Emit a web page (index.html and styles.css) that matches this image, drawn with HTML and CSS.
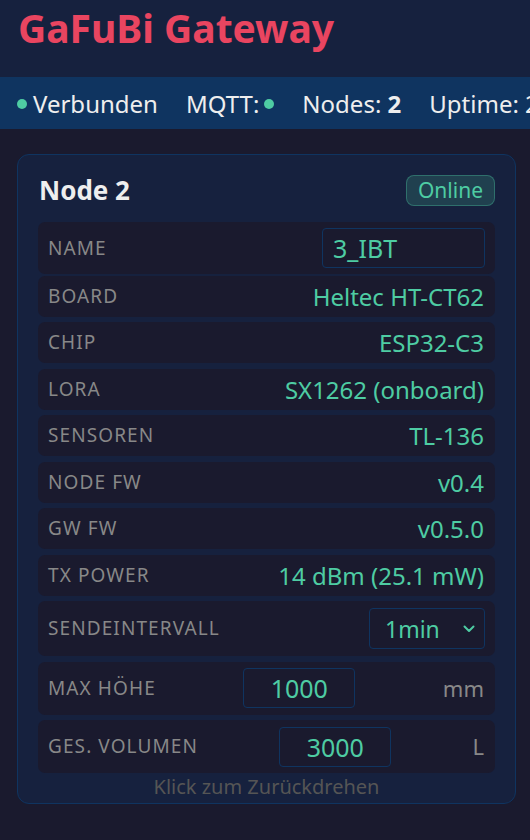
FILE: index.html
```html
<!DOCTYPE html>
<html lang="de">
<head>
    <meta charset="UTF-8">
    <meta name="viewport" content="width=device-width, initial-scale=1.0">
    <title>GaFuBi Gateway</title>
    <link rel="stylesheet" href="styles.css">
</head>
<body>
    <!-- Title bar -->
    <header class="topbar">
        <h1>GaFuBi Gateway</h1>
    </header>

    <!-- Connection status -->
    <div class="status-bar">
        <span class="status-item"><span class="dot dot-before"></span>Verbunden</span>
        <span class="status-item">MQTT:<span class="dot dot-after"></span></span>
        <span class="status-item">Nodes: <strong>2</strong></span>
        <span class="status-item">Uptime: 2h 13m</span>
    </div>

    <main class="content">
        <div class="node-card">
            <div class="card-head">
                <h2>Node 2</h2>
                <span class="badge">Online</span>
            </div>

            <div class="info-list">
                <div class="info-row name-row">
                    <span class="label">Name</span>
                    <input class="text-input" type="text" value="3_IBT">
                </div>
                <div class="info-row">
                    <span class="label">Board</span>
                    <span class="value">Heltec HT-CT62</span>
                </div>
                <div class="info-row">
                    <span class="label">Chip</span>
                    <span class="value">ESP32-C3</span>
                </div>
                <div class="info-row">
                    <span class="label">LoRa</span>
                    <span class="value">SX1262 (onboard)</span>
                </div>
                <div class="info-row">
                    <span class="label">Sensoren</span>
                    <span class="value">TL-136</span>
                </div>
                <div class="info-row">
                    <span class="label">Node FW</span>
                    <span class="value">v0.4</span>
                </div>
                <div class="info-row">
                    <span class="label">GW FW</span>
                    <span class="value">v0.5.0</span>
                </div>
                <div class="info-row">
                    <span class="label">TX Power</span>
                    <span class="value">14 dBm (25.1 mW)</span>
                </div>
                <div class="info-row select-row">
                    <span class="label">Sendeintervall</span>
                    <div class="select-wrap">
                        <select class="interval-select">
                            <option>30s</option>
                            <option selected>1min</option>
                            <option>5min</option>
                            <option>15min</option>
                        </select>
                        <svg class="chevron" width="12" height="8" viewBox="0 0 12 8">
                            <path d="M1.5 1.5 L6 6 L10.5 1.5" fill="none" stroke="#4ecca3" stroke-width="2" stroke-linecap="round" stroke-linejoin="round"/>
                        </svg>
                    </div>
                </div>
                <div class="info-row unit-row">
                    <span class="label">Max Höhe</span>
                    <input class="num-input" type="text" value="1000">
                    <span class="unit">mm</span>
                </div>
                <div class="info-row unit-row">
                    <span class="label">Ges. Volumen</span>
                    <input class="num-input" type="text" value="3000">
                    <span class="unit">L</span>
                </div>
            </div>

            <p class="flip-hint">Klick zum Zurückdrehen</p>
        </div>
    </main>
</body>
</html>
```

FILE: styles.css
```css
/* Dark gateway dashboard */
body {
    font-family: "Noto Sans", "Open Sans", sans-serif;
    background-color: #1a1a2e;
    color: #eee;
    margin: 0;
}

.topbar {
    background-color: #16213e;
    height: 77px;
    box-sizing: border-box;
    padding: 1px 18px 0;
}

.topbar h1 {
    margin: 0;
    font-size: 39px;
    line-height: 53px;
    font-weight: 700;
    color: #e94560;
}

.status-bar {
    background-color: #0f3460;
    height: 52px;
    padding: 0 17px;
    display: flex;
    align-items: center;
    gap: 28px;
    white-space: nowrap;
    overflow: hidden;
    font-size: 24px;
}

.dot {
    display: inline-block;
    width: 10px;
    height: 10px;
    border-radius: 50%;
    background-color: #4ecca3;
    vertical-align: middle;
    position: relative;
    top: -2px;
}

.dot-before {
    margin-right: 6px;
}

.dot-after {
    margin-left: 5px;
}

.content {
    padding: 25px 14px 0 17px;
}

.node-card {
    background-color: #16213e;
    border: 1px solid #0f3460;
    border-radius: 12px;
    padding: 20px 20px 4px;
}

.card-head {
    display: flex;
    align-items: center;
    justify-content: space-between;
    height: 31px;
    margin-bottom: 16px;
}

.card-head h2 {
    margin: 0 0 0 1px;
    font-size: 26px;
    line-height: 31px;
    font-weight: 700;
}

.badge {
    background-color: rgba(78, 204, 163, 0.18);
    border: 1px solid rgba(78, 204, 163, 0.35);
    color: #4ecca3;
    border-radius: 8px;
    padding: 0 11px;
    height: 29px;
    line-height: 29px;
    font-size: 21px;
}

.info-row {
    background-color: #1a1a2e;
    border-radius: 7px;
    padding: 8px 11px 8px 10px;
    line-height: 25px;
    margin-bottom: 5.5px;
    display: flex;
    align-items: center;
    justify-content: space-between;
}

.info-row:last-child {
    margin-bottom: 0;
}

.label {
    color: #888;
    text-transform: uppercase;
    font-size: 19px;
    letter-spacing: 1.1px;
}

.value {
    color: #4ecca3;
    font-size: 24px;
}

.name-row {
    padding-top: 6px;
    padding-bottom: 6px;
    margin-bottom: 1.5px;
}

.text-input,
.num-input,
.interval-select {
    background-color: #1a1a2e;
    border: 1px solid #0f3460;
    border-radius: 4px;
    color: #4ecca3;
    font-family: inherit;
    font-size: 25px;
    height: 40px;
    box-sizing: border-box;
    outline: none;
}

.text-input {
    width: 163px;
    padding: 0 10px;
    margin-right: -1px;
}

.select-row {
    padding-top: 7px;
    padding-bottom: 7px;
}

.select-wrap {
    position: relative;
    margin-right: -1px;
}

.interval-select {
    appearance: none;
    width: 116px;
    height: 41px;
    padding: 0 0 0 15px;
    font-size: 23px;
}

.chevron {
    position: absolute;
    right: 10px;
    top: 17px;
    pointer-events: none;
}

.unit-row {
    padding-top: 6.5px;
    padding-bottom: 6.5px;
}

.num-input {
    width: 112px;
    text-align: center;
}

.unit {
    color: #888;
    font-size: 22px;
}

.flip-hint {
    margin: 1.5px 0 0;
    text-align: center;
    color: #555;
    font-size: 20px;
    line-height: 24px;
}
```
